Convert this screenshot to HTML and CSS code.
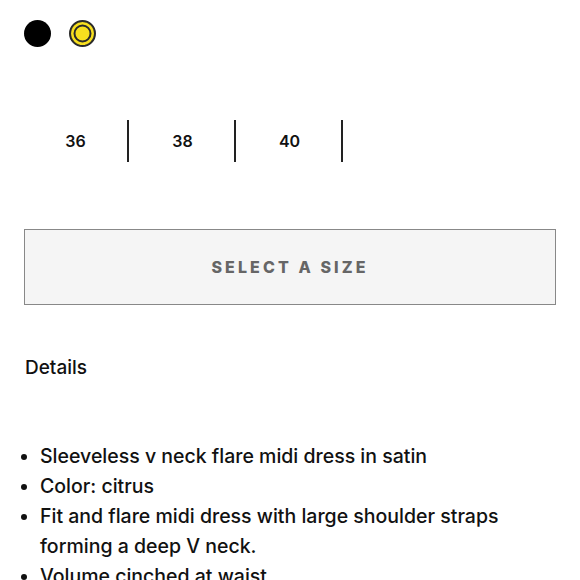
FILE: index.html
```html
<!DOCTYPE html>
<html lang="en">
<head>
  <meta charset="UTF-8" />
  <meta name="viewport" content="width=device-width, initial-scale=1" />
  <title>Product Options</title>
  <link rel="stylesheet" href="styles.css">
</head>
<body>
  <div class="product">
    <div class="swatches">
      <span class="swatch swatch-black"></span>
      <span class="swatch swatch-citrus selected"></span>
    </div>

    <div class="sizes">
      <button class="size">36</button>
      <button class="size">38</button>
      <button class="size">40</button>
    </div>

    <button class="add-btn">Select a size</button>

    <h3 class="details-title">Details</h3>

    <ul class="details-list">
      <li>Sleeveless v neck flare midi dress in satin</li>
      <li>Color: citrus</li>
      <li>Fit and flare midi dress with large shoulder straps forming a deep V neck.</li>
      <li>Volume cinched at waist.</li>
    </ul>
  </div>
</body>
</html>
```

FILE: styles.css
```css
body {
  font-family: Inter, 'Noto Sans', sans-serif;
  background: #fff;
  color: #111;
  margin: 0;
  padding: 0;
}

.product {
  padding: 20px 24px 0 24px;
}

.swatches {
  display: flex;
  gap: 18px;
}

.swatch {
  width: 27px;
  height: 27px;
  border-radius: 50%;
  box-sizing: border-box;
}

.swatch-black {
  background: #000;
}

.swatch-citrus {
  background: #f7df1f;
  border: 2px solid #2a2a2a;
  box-shadow: inset 0 0 0 2.5px #f7df1f, inset 0 0 0 4.5px #2a2a2a;
}

.sizes {
  display: flex;
  margin: 73px 0 0 -2px;
}

.size {
  width: 107px;
  height: 42px;
  background: none;
  border: none;
  border-right: 2px solid #222;
  font-family: inherit;
  font-size: 16px;
  font-weight: 600;
  color: #111;
  padding: 0 0 0 2px;
}

.add-btn {
  display: block;
  width: 100%;
  height: 76px;
  margin-top: 67px;
  background: #f5f5f5;
  border: 1.5px solid #888;
  color: #666;
  font-family: inherit;
  font-size: 16px;
  font-weight: 800;
  letter-spacing: 3.1px;
  text-transform: uppercase;
}

.details-title {
  font-size: 19px;
  font-weight: 500;
  margin: 51px 0 0 1px;
}

.details-list {
  margin: 62px 0 0 0;
  padding-left: 16px;
  font-size: 19.5px;
  font-weight: 500;
  line-height: 30px;
}
```
